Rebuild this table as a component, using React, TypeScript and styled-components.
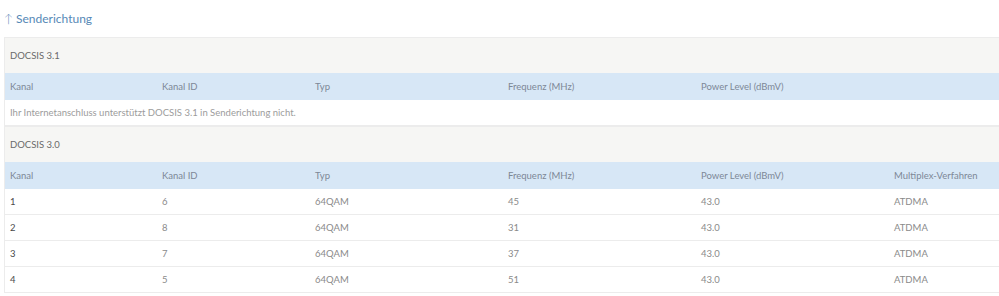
import styled, { createGlobalStyle } from "styled-components";

const GlobalStyle = createGlobalStyle`
  body {
    margin: 0;
    background: #fff;
    font-family: "Lato", "Open Sans", sans-serif;
  }
`;

const Page = styled.div`
  padding: 0 0 0 4px;
`;

const Heading = styled.h2`
  margin: 0;
  height: 37px;
  display: flex;
  align-items: center;
  font-size: 12px;
  font-weight: 400;
  color: #5688b6;
`;

const Arrow = styled.span`
  font-weight: 300;
  margin-right: 3px;
`;

const Table = styled.div`
  border-left: 1px solid #ececec;
`;

const Section = styled.div`
  height: 36px;
  display: flex;
  align-items: center;
  padding-left: 5px;
  background: #f6f6f4;
  border-top: 1px solid #ececec;
  font-size: 9.5px;
  color: #6a6a6a;
  box-sizing: border-box;
`;

const Row = styled.div<{ $head?: boolean }>`
  display: grid;
  grid-template-columns: 152px 153px 193px 193px 193px 1fr;
  align-items: center;
  height: ${({ $head }) => ($head ? "27px" : "26px")};
  background: ${({ $head }) => ($head ? "#d7e7f6" : "#fff")};
  border-bottom: 1px solid ${({ $head }) => ($head ? "#d7e7f6" : "#ececec")};
  box-sizing: border-box;
  font-size: 9.5px;
  color: ${({ $head }) => ($head ? "#7d8896" : "#8a8a8a")};
`;

const Cell = styled.div<{ $strong?: boolean }>`
  padding-left: 5px;
  color: ${({ $strong }) => ($strong ? "#4a4a4a" : "inherit")};
`;

const Notice = styled.div`
  height: 26px;
  display: flex;
  align-items: center;
  padding-left: 5px;
  font-size: 9.5px;
  color: #9c9c9c;
  border-bottom: 1px solid #ececec;
  box-sizing: border-box;
`;

const head31 = ["Kanal", "Kanal ID", "Typ", "Frequenz (MHz)", "Power Level (dBmV)", ""];
const head30 = ["Kanal", "Kanal ID", "Typ", "Frequenz (MHz)", "Power Level (dBmV)", "Multiplex-Verfahren"];

const channels = [
  ["1", "6", "64QAM", "45", "43.0", "ATDMA"],
  ["2", "8", "64QAM", "31", "43.0", "ATDMA"],
  ["3", "7", "64QAM", "37", "43.0", "ATDMA"],
  ["4", "5", "64QAM", "51", "43.0", "ATDMA"],
];

export default function App() {
  return (
    <Page>
      <GlobalStyle />
      <Heading>
        <Arrow>↑</Arrow>Senderichtung
      </Heading>
      <Table>
        <Section>DOCSIS 3.1</Section>
        <Row $head>
          {head31.map((h, i) => (
            <Cell key={i}>{h}</Cell>
          ))}
        </Row>
        <Notice>Ihr Internetanschluss unterstützt DOCSIS 3.1 in Senderichtung nicht.</Notice>
        <Section>DOCSIS 3.0</Section>
        <Row $head>
          {head30.map((h, i) => (
            <Cell key={i}>{h}</Cell>
          ))}
        </Row>
        {channels.map((row) => (
          <Row key={row[0]}>
            {row.map((v, i) => (
              <Cell key={i} $strong={i === 0}>
                {v}
              </Cell>
            ))}
          </Row>
        ))}
      </Table>
    </Page>
  );
}
